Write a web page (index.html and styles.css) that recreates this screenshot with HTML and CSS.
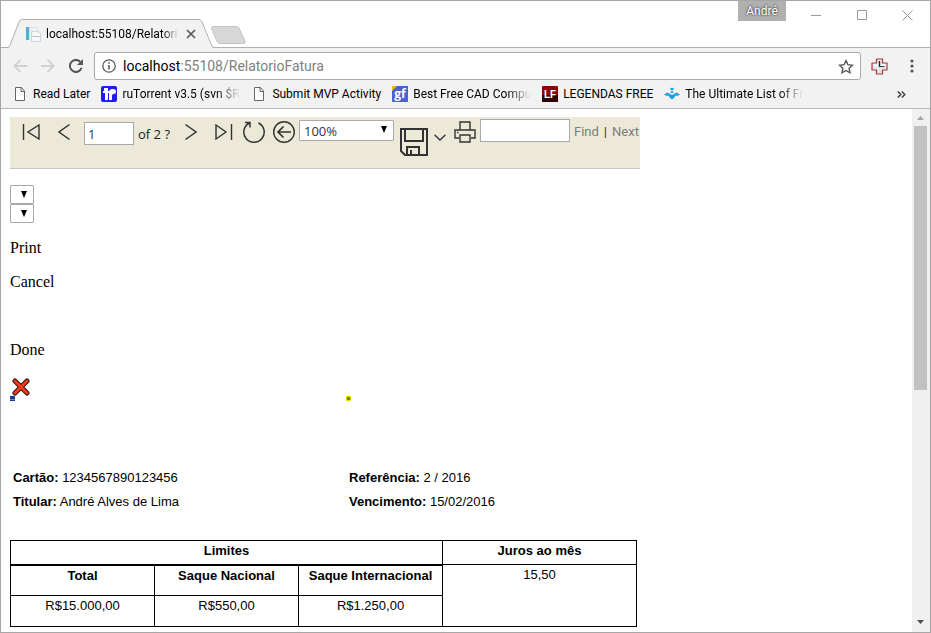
FILE: index.html
```html
<!DOCTYPE html>
<html lang="pt-BR">
<head>
<meta charset="utf-8">
<title>localhost:55108/RelatorioFatura</title>
<link rel="stylesheet" href="styles.css">
</head>
<body>
<div class="window">
  <header class="titlebar">
    <div class="tab">
      <svg class="tab-shape" viewBox="0 0 206 30" aria-hidden="true"><path d="M0 29.500 Q1.500 29 2.500 26 L11 3 Q12 .5 14 .5 H191 Q193 .5 194 3 L203 26 Q204 29 206 29.500V30H0Z" fill="#f2f2f2"/><path d="M0 28.500 Q1.500 28 2.500 25 L11 3 Q12 .5 14 .5 H191 Q193 .5 194 3 L203 25 Q204 28 206 28.500" fill="none" stroke="#b0b0b0"/></svg>
      <svg class="tab-icon" viewBox="0 0 16 16" aria-hidden="true"><path d="M1 1h3v13H1z" fill="#5fa8cf"/><path d="M4.500 1.500h7l2 3v8h-9z" fill="#eef3f8" stroke="#d3dce5"/><path d="M6.500 5.500h6l3 2v8h-9z" fill="#f6f8fa" stroke="#ccd5de"/><path d="M7 10.500h8" stroke="#b4c5d6"/></svg>
      <span class="tab-title">localhost:55108/RelatorioFatura</span>
      <button class="bare tab-close" aria-label="Close tab"><svg width="10" height="10" viewBox="0 0 10 10"><path d="M1 1l8 8M9 1L1 9" stroke="#5a5a5a" stroke-width="1.700"/></svg></button>
    </div>
    <button class="bare new-tab" aria-label="New tab"><svg width="36" height="18" viewBox="0 0 36 18"><path d="M2 .5H25Q27 .5 28 2L34 15Q35 17.500 32 17.500H9Q7 17.500 6 15.500L.8 3Q0 .5 2 .5Z" fill="#d7d7d7" stroke="#c2c2c2"/></svg></button>
    <div class="window-controls">
      <span class="user">André</span>
      <button class="bare control" aria-label="Minimize"><svg width="10" height="11" viewBox="0 0 10 11"><path d="M0 5.500h10" stroke="#999"/></svg></button>
      <button class="bare control" aria-label="Maximize"><svg width="10" height="10" viewBox="0 0 10 10"><path d="M.5.5h9v9h-9z" fill="none" stroke="#999"/></svg></button>
      <button class="bare control" aria-label="Close"><svg width="11" height="11" viewBox="0 0 11 11"><path d="M.5.5l10 10M10.500.5l-10 10" stroke="#999"/></svg></button>
    </div>
  </header>

  <nav class="navbar">
    <button class="bare nav-button" aria-label="Back"><svg width="14" height="14" viewBox="0 0 14 14"><path d="M14 7H1.500M7.500.8L1.300 7l6.200 6.200" fill="none" stroke="#d0d0d0" stroke-width="1.800"/></svg></button>
    <button class="bare nav-button" aria-label="Forward"><svg width="14" height="14" viewBox="0 0 14 14"><path d="M0 7h12.500M6.500.8L12.700 7l-6.200 6.200" fill="none" stroke="#d0d0d0" stroke-width="1.800"/></svg></button>
    <button class="bare nav-button" aria-label="Reload"><svg width="14" height="14" viewBox="0 0 14 14"><path d="M12.600 8.800A6 6 0 1 1 11.300 2.800" fill="none" stroke="#555" stroke-width="2"/><path d="M14 0v6H8z" fill="#555"/></svg></button>
    <div class="address">
      <svg width="14" height="14" viewBox="0 0 14 14" aria-hidden="true"><circle cx="7" cy="7" r="6.200" fill="none" stroke="#5a5a5a" stroke-width="1.300"/><path d="M7 6v4.500M7 3.300v1.500" stroke="#5a5a5a" stroke-width="1.600"/></svg>
      <span class="url">localhost<span class="url-rest">:55108/RelatorioFatura</span></span>
      <button class="bare" aria-label="Bookmark this page"><svg width="16" height="15" viewBox="0 0 16 15"><path d="M8 1.500l1.900 4.200 4.600.5-3.400 3.100.9 4.500L8 11.500l-4 2.300.9-4.500L1.500 6.200l4.600-.5z" fill="none" stroke="#555" stroke-width="1.400"/></svg></button>
    </div>
    <button class="bare extension" aria-label="Extension"><svg width="17" height="17" viewBox="0 0 17 17"><path d="M5.500 1h6v4H16v7h-4.500v4h-6v-4H1V5h4.500z" fill="#e1e6ef" stroke="#b03a32" stroke-width="1.200" stroke-linejoin="round"/><path d="M2.500 6.500H7v-4h3v4h4.500v2h-12z" fill="#fbfcfe"/><path d="M8.500 3v6" stroke="#222" stroke-width="1.500"/><path d="M8 8.500h5.500" stroke="#333"/></svg></button>
    <button class="bare menu" aria-label="Menu"><svg width="4" height="14" viewBox="0 0 4 14" fill="#555"><circle cx="2" cy="2" r="1.600"/><circle cx="2" cy="7" r="1.600"/><circle cx="2" cy="12" r="1.600"/></svg></button>
  </nav>

  <nav class="bookmarks">
    <a class="bookmark" href="#"><svg class="mark" viewBox="0 0 16 16"><path d="M3.500 1.500h6l3 3.500v9.500h-9zM9 1.500V5.500h3.500" fill="#fff" stroke="#666"/></svg><span>Read Later</span></a>
    <a class="bookmark cropped" href="#"><svg class="mark" viewBox="0 0 16 16"><rect width="16" height="16" rx="2" fill="#1d1df0"/><path d="M3 2h4v3h1v2H7v6q-1 2-3 1V7H2V5h1zM8 6q0-3 4-3 3 0 3 2.500T12.500 8q-1.500 0-1.500 1.500V14H8z" fill="#fff"/></svg><span class="fade">ruTorrent v3.5 (svn $Rev</span></a>
    <a class="bookmark" href="#"><svg class="mark" viewBox="0 0 16 16"><path d="M3.500 1.500h6l3 3.500v9.500h-9zM9 1.500V5.500h3.500" fill="#fff" stroke="#666"/></svg><span>Submit MVP Activity</span></a>
    <a class="bookmark cropped" href="#"><svg class="mark" viewBox="0 0 16 16"><path d="M0 0h16v16H0z" fill="#4a62cf"/><path d="M0 0h5L0 5z" fill="#f5b517"/><text class="gf" x="8" y="12" text-anchor="middle">gf</text></svg><span class="fade">Best Free CAD Computer</span></a>
    <a class="bookmark" href="#"><svg class="mark" viewBox="0 0 16 16"><rect width="16" height="16" rx="1" fill="#8c0808"/><path d="M0 9h16v7H0z" fill="#2e0303"/><text class="lf" x="8" y="12" text-anchor="middle">LF</text></svg><span>LEGENDAS FREE</span></a>
    <a class="bookmark cropped" href="#"><svg class="mark" viewBox="0 0 16 16" fill="#1ba1e2"><path d="M8 1.500l2.500 1.500L8 4.500 5.500 3z"/><path d="M0 8.500l3.500-2L8 9l4.500-2.500 3.500 2-3 1.500-1.500-.5-1 2L8 13.500l-2.500-2-1-2L3 10zM6 6l2 1.200L10 6 8 5z"/></svg><span class="fade">The Ultimate List of Free</span></a>
    <button class="bare more" aria-label="More bookmarks"><svg width="9" height="7" viewBox="0 0 9 7"><path d="M.8.5l3 3-3 3M4.800.5l3 3-3 3" fill="none" stroke="#444" stroke-width="1.500"/></svg></button>
  </nav>

  <div class="viewport">
    <main class="page">
      <div class="report-bar">
        <button class="bare t-first" aria-label="First page"><svg width="18" height="18" viewBox="0 0 18 18"><path d="M1.500 1v16M17 2v14L6 9z" fill="none" stroke="#333" stroke-width="1.400"/></svg></button>
        <button class="bare t-prev" aria-label="Previous page"><svg width="12" height="18" viewBox="0 0 12 18"><path d="M11.500 1.500L1 9l10.500 7.500" fill="none" stroke="#333" stroke-width="1.500"/></svg></button>
        <input class="page-number" type="text" value="1" aria-label="Page">
        <span class="page-total">of 2 ?</span>
        <button class="bare t-next" aria-label="Next page"><svg width="12" height="18" viewBox="0 0 12 18"><path d="M.5 1.500L11 9 .5 16.500" fill="none" stroke="#333" stroke-width="1.500"/></svg></button>
        <button class="bare t-last" aria-label="Last page"><svg width="18" height="18" viewBox="0 0 18 18"><path d="M16.500 1v16M1 2v14l10-7z" fill="none" stroke="#333" stroke-width="1.400"/></svg></button>
        <button class="bare t-round" aria-label="Refresh"><svg width="24" height="24" viewBox="0 0 24 24"><path d="M7.500 3A10.200 10.200 0 1 0 16.500 3M3 2.500h5v5" fill="none" stroke="#333" stroke-width="1.500"/></svg></button>
        <button class="bare t-back" aria-label="Back to parent report"><svg width="24" height="24" viewBox="0 0 24 24"><circle cx="12" cy="12" r="10.300" fill="none" stroke="#333" stroke-width="1.400"/><path d="M19 12H6M11.500 6.500L6 12l5.500 5.500" fill="none" stroke="#333" stroke-width="1.700"/></svg></button>
        <span class="picker zoom"><select aria-label="Zoom"><option>100%</option></select><svg class="caret" viewBox="0 0 6 7"><path d="M0 0h6L3 7z"/></svg></span>
        <button class="bare t-save" aria-label="Export"><svg width="28" height="28" viewBox="0 0 28 28"><path d="M1 1h26v26H5l-4-4zM5 1v12h18V1M7 27v-8h12v8M11 22v5" fill="none" stroke="#333" stroke-width="2"/></svg></button>
        <button class="bare t-chevron" aria-label="Export formats"><svg width="12" height="7" viewBox="0 0 12 7"><path d="M.5.8L6 6l5.500-5.200" fill="none" stroke="#333" stroke-width="1.300"/></svg></button>
        <button class="bare t-print" aria-label="Print"><svg width="22" height="22" viewBox="0 0 22 22" fill="none" stroke="#333" stroke-width="1.400"><path d="M6 9V1h10v8M5 17H1V9h20v8h-4M6 14h10v7H6z"/><path d="M3 11.500h1.500"/></svg></button>
        <input class="search" type="text" aria-label="Find text">
        <a class="find" href="#">Find</a><span class="divider">|</span><a class="next" href="#">Next</a>
      </div>

      <div class="print-options">
        <span class="picker small"><select aria-label="Paper size"></select><svg class="caret" viewBox="0 0 6 7"><path d="M0 0h6L3 7z"/></svg></span>
        <span class="picker small"><select aria-label="Orientation"></select><svg class="caret" viewBox="0 0 6 7"><path d="M0 0h6L3 7z"/></svg></span>
      </div>
      <p>Print</p>
      <p>Cancel</p>
      <p class="blank"></p>
      <p>Done</p>

      <section class="report">
        <svg class="broken" width="18" height="18" viewBox="0 0 18 18" aria-hidden="true"><path d="M3 3l12 12M15 3L3 15" stroke="#2a1510" stroke-width="5" stroke-linecap="round"/><path d="M3 3l12 12M15 3L3 15" stroke="#f03a17" stroke-width="3" stroke-linecap="round"/></svg>
        <div class="pair marks"><svg width="5" height="5" viewBox="0 0 5 5"><path d="M0 0h5v5H0z" fill="#173a9c"/><path d="M0 3h5v1H0z" fill="#8d8f86"/></svg><svg width="5" height="5" viewBox="0 0 5 5"><path d="M0 0h5v5H0z" fill="#e6dc00"/><path d="M1 1h3v3H1z" fill="#7a7b30"/></svg></div>
        <div class="pair info">
          <span><b>Cartão:</b> 1234567890123456</span><span><b>Referência:</b> 2 / 2016</span>
          <span><b>Titular:</b> André Alves de Lima</span><span><b>Vencimento:</b> 15/02/2016</span>
        </div>
        <table>
          <colgroup><col class="limit"><col class="limit"><col class="limit"><col class="rate"></colgroup>
          <tr class="group"><th class="heavy" colspan="3">Limites</th><th>Juros ao mês</th></tr>
          <tr><th>Total</th><th>Saque Nacional</th><th>Saque Internacional</th><td rowspan="2">15,50</td></tr>
          <tr><td>R$15.000,00</td><td>R$550,00</td><td>R$1.250,00</td></tr>
        </table>
      </section>
    </main>
    <div class="scrollbar" aria-hidden="true">
      <svg class="arrow" viewBox="0 0 17 17"><path d="M5 11l3.500-4 3.500 4z" fill="#a3a3a3"/></svg>
      <div class="track"><div class="thumb"></div></div>
      <svg class="arrow" viewBox="0 0 17 17"><path d="M5 5l3.500 4L12 5z" fill="#505050"/></svg>
    </div>
  </div>
</div>
</body>
</html>
```
FILE: styles.css
```css
* { box-sizing: border-box; }
body { margin: 0; background: #fff; color: #000; }
svg { display: block; flex: none; }
a { color: inherit; text-decoration: none; }
.bare { display: block; flex: none; margin: 0; padding: 0; border: 0; background: none; }

.window {
  display: flex;
  flex-direction: column;
  height: 100vh;
  border: 1px solid #a6a6a6;
  overflow: hidden;
  font: 12px/16px Roboto, sans-serif;
}

.titlebar { display: flex; height: 47px; border-bottom: 1px solid #b0b0b0; flex: none; }
.tab {
  position: relative;
  display: flex;
  align-items: center;
  width: 206px;
  height: 30px;
  margin: 18px 0 0 7px;
  padding-left: 17px;
}
.tab-shape { position: absolute; left: 0; top: 0; width: 206px; height: 30px; }
.tab-icon, .tab-title, .tab-close { position: relative; }
.tab-icon { width: 16px; height: 16px; }
.tab-title {
  width: 133px;
  margin: 0 7px 0 5px;
  overflow: hidden;
  white-space: nowrap;
  mask-image: linear-gradient(to right, #000 116px, transparent);
}
.new-tab { margin: 25px 0 0 -3px; height: 18px; }
.window-controls { display: flex; margin-left: auto; }
.user {
  width: 48px;
  height: 20px;
  margin-right: 7px;
  background: #b0b0b0;
  color: #fff;
  font-size: 12px;
  line-height: 20px;
  text-align: center;
  text-shadow: 0 0 2px #444, 0 0 2px #444;
}
.control { display: grid; place-items: center; width: 46px; height: 28px; }
.control:last-child { width: 45px; }

.navbar { display: flex; align-items: center; flex: none; height: 36px; padding-left: 5px; background: #f2f2f2; }
.nav-button { display: grid; place-items: center; width: 28px; height: 28px; }
.address {
  display: flex;
  flex: 1;
  align-items: center;
  gap: 7px;
  height: 28px;
  margin-left: 4px;
  padding: 0 6px 0 7px;
  border: 1px solid #a9a9a9;
  border-radius: 3px;
  background: #fff;
}
.url { flex: 1; font-size: 14px; }
.url-rest { color: #808080; }
.extension { margin-left: 10px; }
.menu { margin: 0 16px 0 22px; }

.bookmarks {
  display: flex;
  align-items: center;
  flex: none;
  height: 25px;
  gap: 11px;
  padding: 0 24px 4px 11px;
  border-bottom: 1px solid #b6b6b6;
  background: #f2f2f2;
}
.bookmark { display: flex; align-items: center; gap: 5px; flex: none; white-space: nowrap; }
.mark { width: 16px; height: 16px; }
.fade { flex: 1; overflow: hidden; mask-image: linear-gradient(to left, transparent, #000 24px); }
.cropped { width: 139px; }
.gf { font: bold 12px "Open Sans", sans-serif; fill: #fff; }
.lf { font: bold 10px "Liberation Sans", sans-serif; fill: #fff; }
.more { margin-left: auto; }

.viewport { display: flex; flex: 1; min-height: 0; overflow: hidden; }
.page { flex: 1; min-width: 0; padding: 8px 9px 0; font: 16px/18px "Liberation Serif", serif; }
.page p { margin: 16px 0 0; }
.blank { height: 18px; }

.report-bar {
  display: flex;
  align-items: flex-start;
  max-width: 630px;
  height: 52px;
  padding-left: 12px;
  border-bottom: 1px solid #c6c6c6;
  background: #ece9d8;
  font: 13px/16px "Open Sans", sans-serif;
}
.t-first { margin-top: 6px; }
.t-prev { margin: 6px 14px 0 18px; }
.t-next { margin-top: 6px; }
.t-last { margin: 6px 9px 0 18px; }
.t-round { margin-top: 3px; }
.t-back { margin: 3px 3px 0 6px; }
.t-save { margin: 11px 6px 0; }
.t-chevron { margin-top: 17px; }
.t-print { margin: 4px 4px 0 8px; }
.page-number, .search, select {
  border: 1px solid #a9a9a9;
  border-radius: 0;
  background: #fff;
  color: #333;
  font: inherit;
}
.page-number { width: 50px; height: 23px; margin-top: 5px; padding: 1px 3px; }
.page-total { width: 51px; margin-top: 9px; padding-left: 4px; color: #222; }
.search { width: 90px; height: 23px; margin-top: 2px; }
.find, .divider, .next { margin-top: 7px; color: #7d7d7d; font-family: Roboto, sans-serif; }
.find { margin-left: 4px; }
.divider { margin-left: 5px; margin-right: 5px; color: #333; }

.picker { position: relative; display: block; }
.picker select { display: block; width: 100%; height: 100%; padding: 0 4px; appearance: none; border-radius: 1px; }
.caret { position: absolute; right: 7px; top: 6px; width: 6px; height: 7px; }
.zoom { width: 95px; height: 21px; margin-top: 3px; }
.small { width: 24px; height: 19px; }
.print-options { margin-top: 16px; }

.report { font: 13px/16px "Liberation Sans", sans-serif; }
.broken { margin: 19px 0 0 2px; }
.pair { display: grid; grid-template-columns: 336px 1fr; }
.marks { margin-bottom: 65px; }
.info { line-height: 24px; padding-left: 3px; }
table { width: 627px; margin-top: 26px; border-collapse: collapse; table-layout: fixed; }
.limit { width: 144px; }
.rate { width: 194px; }
tr { height: 31px; }
.group { height: 24px; }
th, td { padding: 2px 0 0; border: 1px solid #000; text-align: center; vertical-align: top; }
.heavy { border-bottom-width: 2px; }

.scrollbar { display: flex; flex-direction: column; flex: none; width: 18px; background: #f0f0f0; }
.arrow { width: 17px; height: 17px; }
.track { flex: 1; padding: 0 2px; }
.thumb { width: 13px; height: 54%; background: #c1c1c1; }
```
